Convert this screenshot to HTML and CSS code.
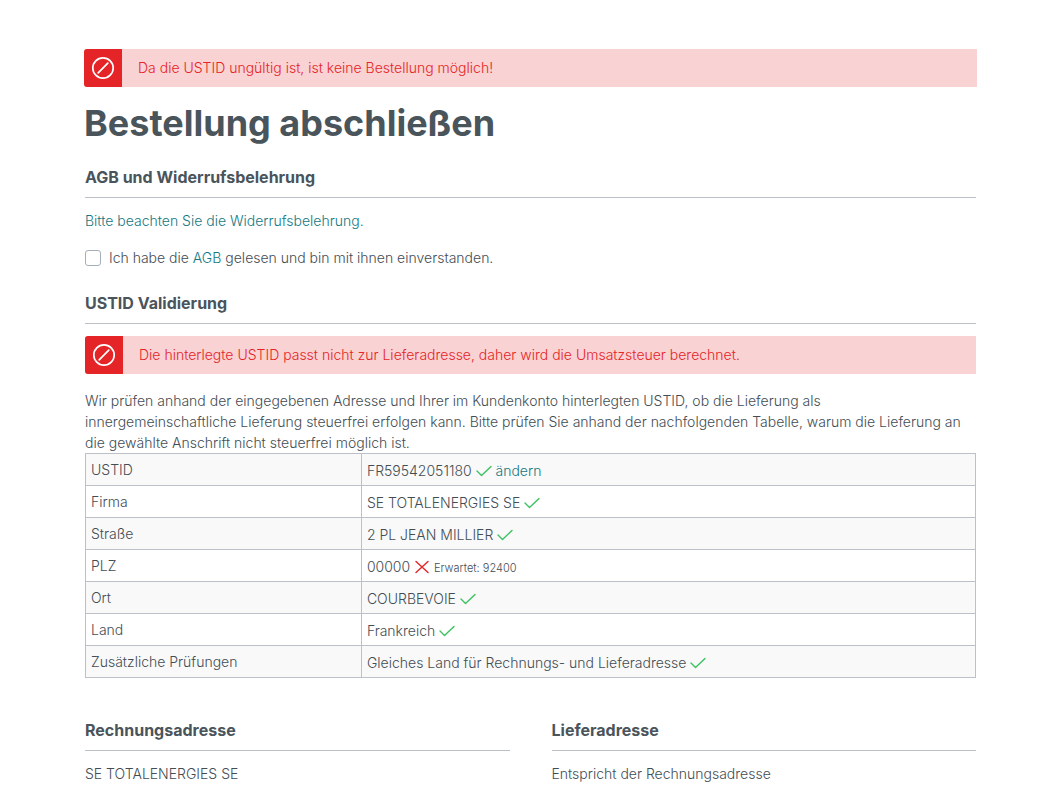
FILE: index.html
```
<!DOCTYPE html>
<html lang="de">
<head>
<meta charset="utf-8">
<title>Bestellung abschließen</title>
<link rel="stylesheet" href="styles.css">
</head>
<body>
<svg class="sprite" aria-hidden="true">
  <symbol id="blocked" viewBox="0 0 24 24"><circle cx="12" cy="12" r="10.200"/><path d="M7.200 16.800 16.800 7.200"/></symbol>
  <symbol id="check" viewBox="0 0 16 16"><path d="M1 8 5.500 12.500 15 3.500"/></symbol>
  <symbol id="cross" viewBox="0 0 16 16"><path d="M2 2.500 14 13.500M14 2.500 2 13.500"/></symbol>
</svg>
<main class="page">
  <div class="alert" role="alert">
    <span class="alert-icon"><svg><use href="#blocked"/></svg></span>
    <p class="alert-text">Da die USTID ungültig ist, ist keine Bestellung möglich!</p>
  </div>
  <h1 class="page-title">Bestellung abschließen</h1>
  <div class="content">
    <section class="terms">
      <h2 class="card-title">AGB und Widerrufsbelehrung</h2>
      <p class="notice"><a href="#">Bitte beachten Sie die Widerrufsbelehrung.</a></p>
      <div class="check-row">
        <input type="checkbox" id="tos" class="checkbox">
        <label for="tos">Ich habe die <a href="#">AGB</a> gelesen und bin mit ihnen einverstanden.</label>
      </div>
    </section>
    <section class="validation">
      <h2 class="card-title">USTID Validierung</h2>
      <div class="alert" role="alert">
        <span class="alert-icon"><svg><use href="#blocked"/></svg></span>
        <p class="alert-text">Die hinterlegte USTID passt nicht zur Lieferadresse, daher wird die Umsatzsteuer berechnet.</p>
      </div>
      <p class="explanation">Wir prüfen anhand der eingegebenen Adresse und Ihrer im Kundenkonto hinterlegten USTID, ob die Lieferung als innergemeinschaftliche Lieferung steuerfrei erfolgen kann. Bitte prüfen Sie anhand der nachfolgenden Tabelle, warum die Lieferung an die gewählte Anschrift nicht steuerfrei möglich ist.</p>
      <table class="checks">
        <tbody>
          <tr><th scope="row">USTID</th><td>FR59542051180 <svg class="icon ok"><use href="#check"/></svg> <a href="#">ändern</a></td></tr>
          <tr><th scope="row">Firma</th><td>SE TOTALENERGIES SE <svg class="icon ok"><use href="#check"/></svg></td></tr>
          <tr><th scope="row">Straße</th><td>2 PL JEAN MILLIER <svg class="icon ok"><use href="#check"/></svg></td></tr>
          <tr><th scope="row">PLZ</th><td>00000 <svg class="icon bad"><use href="#cross"/></svg> <small>Erwartet: 92400</small></td></tr>
          <tr><th scope="row">Ort</th><td>COURBEVOIE <svg class="icon ok"><use href="#check"/></svg></td></tr>
          <tr><th scope="row">Land</th><td>Frankreich <svg class="icon ok"><use href="#check"/></svg></td></tr>
          <tr><th scope="row">Zusätzliche Prüfungen</th><td>Gleiches Land für Rechnungs- und Lieferadresse <svg class="icon ok"><use href="#check"/></svg></td></tr>
        </tbody>
      </table>
    </section>
    <div class="addresses">
      <section>
        <h2 class="card-title">Rechnungsadresse</h2>
        <p>SE TOTALENERGIES SE</p>
      </section>
      <section>
        <h2 class="card-title">Lieferadresse</h2>
        <p>Entspricht der Rechnungsadresse</p>
      </section>
    </div>
  </div>
</main>
</body>
</html>
```
FILE: styles.css
```
* { box-sizing: border-box; }
html { overflow-x: hidden; scrollbar-width: none; }
body {
  margin: 0;
  background: #fff;
  color: #434d54;
  font: 300 14px/21px Inter, "Liberation Sans", sans-serif;
}
h1, h2, p { margin: 0; }
h1, h2 { color: #4a545b; }
a { color: #147882; text-decoration: none; }
.sprite { display: none; }
.page { padding: 49px 77px 0 84px; }
.content { padding: 0 1px; }

.alert {
  display: flex;
  background: #f9d2d3;
  color: #e52427;
  border-radius: 3px 0 0 3px;
  overflow: hidden;
}
.alert-icon {
  display: flex;
  align-items: center;
  justify-content: center;
  flex: none;
  width: 38px;
  background: #e52427;
}
.alert-icon svg {
  width: 24px;
  height: 24px;
  fill: none;
  stroke: #fff;
  stroke-width: 1.7;
  stroke-linecap: round;
}
.alert-text { padding: 8px 16px 9px; }

.page-title {
  padding: 14px 0 20px;
  font-size: 36px;
  line-height: 44px;
  font-weight: 700;
}
.card-title {
  padding-bottom: 8px;
  margin-bottom: 12px;
  border-bottom: 1px solid #bcc1c7;
  font-size: 16px;
  line-height: 24px;
  font-weight: 700;
}
.notice { margin-bottom: 16px; }
.check-row { display: flex; align-items: center; gap: 8px; }
.checkbox {
  appearance: none;
  width: 16px;
  height: 16px;
  margin: 0;
  border: 1px solid #a5afb9;
  border-radius: 3px;
  background: #fff;
}
.checkbox:checked { background: #147882; }
.validation { margin-top: 23px; }
.explanation { margin-top: 16px; }

.checks {
  width: 100%;
  table-layout: fixed;
  border-collapse: collapse;
}
.checks th, .checks td {
  padding: 5px;
  border: 1px solid #bcc1c7;
  text-align: left;
  vertical-align: top;
  font-weight: inherit;
}
.checks th { width: 31%; }
.checks td { padding: 6px 5px 4px; }
.checks tr:nth-child(odd) { background: #f9f9f9; }
.icon {
  width: 16px;
  height: 16px;
  vertical-align: -3px;
  fill: none;
  stroke-width: 1.4;
  stroke-linecap: round;
  stroke-linejoin: round;
}
.ok { stroke: #3cc261; }
.bad { stroke: #e52427; }
small { font-size: 11px; line-height: 1; }

.addresses {
  display: grid;
  grid-template-columns: 1fr 1fr;
  gap: 42px;
  margin-top: 40px;
}
```
